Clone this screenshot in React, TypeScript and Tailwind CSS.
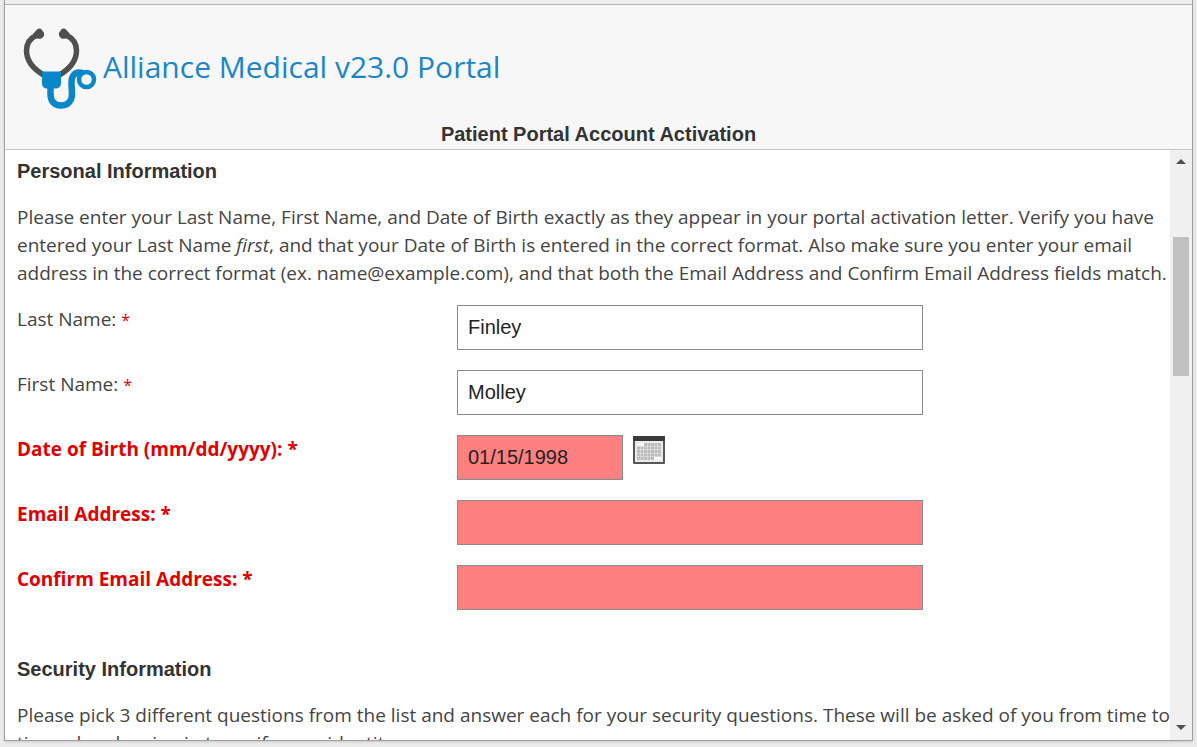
import { useState } from 'react';

// utils
import clsx from 'clsx';

interface IField {
  id: string;
  label: string;
  value: string;
  invalid?: boolean;
  isDate?: boolean;
}

const initialFields: IField[] = [
  { id: 'lastName', label: 'Last Name:', value: 'Finley' },
  { id: 'firstName', label: 'First Name:', value: 'Molley' },
  {
    id: 'birthDate',
    label: 'Date of Birth (mm/dd/yyyy):',
    value: '01/15/1998',
    invalid: true,
    isDate: true,
  },
  { id: 'email', label: 'Email Address:', value: '', invalid: true },
  { id: 'confirmEmail', label: 'Confirm Email Address:', value: '', invalid: true },
];

const Logo: React.FC = () => (
  <svg width="74" height="84" viewBox="23 27 74 84" fill="none" aria-hidden="true">
    {/* ear tubes */}
    <path
      d="M37 35C29.500 38.500 26.500 43.500 26.500 50.500c0 10.500 7.500 19 18 25"
      stroke="#4f4f4f"
      strokeWidth="5.500"
    />
    <path
      d="M66 35C73.500 38.500 76.500 43.500 76.500 50.500c0 10.500-7.500 19-18 25"
      stroke="#4f4f4f"
      strokeWidth="5.500"
    />
    <path
      d="M33 34l4-4.500c1.500-1.500 4-1.200 5 .5l1.800 2.500c1 2 0 4.500-2 5.700-2 1-4.500.8-6.500-.7z"
      fill="#4f4f4f"
    />
    <path
      d="M70 34l-4-4.500c-1.500-1.500-4-1.200-5 .5l-1.800 2.500c-1 2 0 4.500 2 5.700 2 1 4.500.8 6.500-.7z"
      fill="#4f4f4f"
    />
    {/* hose and chest piece */}
    <path d="M42 71.500h19v11c0 4-2 6-6 6h-7.500c-4 0-5.500-2-5.500-6z" fill="#0a87c9" />
    <path
      d="M50.500 86v8c0 7.500 4 11.500 10.500 11.500S72 101 72 94c0-4-.5-7-.5-11 0-7 3-10.500 7.500-10.500 2 0 3 .5 4 1"
      stroke="#0a87c9"
      strokeWidth="6.500"
    />
    <circle cx="86.500" cy="79.500" r="7.500" stroke="#0a87c9" strokeWidth="4.500" />
  </svg>
);

const CalendarIcon: React.FC = () => (
  <svg width="32" height="28" viewBox="0 0 32 28" aria-hidden="true">
    <rect width="32" height="28" rx="1" fill="#58585a" />
    <rect width="32" height="5" rx="1" fill="#3a3a3c" />
    <rect x="2" y="5" width="28" height="21" fill="#ececec" />
    {[0, 1, 2, 3, 4].map((row) =>
      [0, 1, 2, 3, 4, 5, 6].map((col) => (
        <rect
          key={`${row}-${col}`}
          x={4 + col * 3.5}
          y={7 + row * 3.5}
          width="3"
          height="3"
          fill={(row === 0 && col < 2) || (row === 4 && col > 4) ? '#ffffff' : '#bcbcbc'}
        />
      ))
    )}
  </svg>
);

const Scrollbar: React.FC = () => (
  <div className="flex w-[22px] shrink-0 flex-col items-center bg-[#f0f0f0]" aria-hidden="true">
    <svg width="10" height="21" viewBox="0 0 10 21">
      <path d="M0 14l5-5 5 5z" fill="#505050" />
    </svg>
    <div className="h-[66px]" />
    <div className="h-[139px] w-4 bg-[#c1c1c1]" />
    <div className="flex-1" />
    <svg width="10" height="21" viewBox="0 0 10 21">
      <path d="M0 6l5 5 5-5z" fill="#505050" />
    </svg>
  </div>
);

const App: React.FC = () => {
  const [fields, setFields] = useState(initialFields);

  const handleChange = (id: string, value: string) => {
    setFields(fields.map((field) => (field.id === id ? { ...field, value } : field)));
  };

  return (
    <div className="flex h-screen flex-col bg-[#ebebeb] px-1 pb-[6px] font-['Open_Sans',sans-serif] text-[19px] leading-7 text-[#444444]">
      <div className="flex min-h-0 flex-1 flex-col border-x border-b border-[#a0a0a0] bg-white shadow-sm">
        <div className="h-[5px] shrink-0 border-b border-[#b0b0b0] bg-[#efefef]" />

        <header className="shrink-0 border-b border-[#c8c8c8] bg-[#f7f7f7] px-[18px] pt-[22px]">
          <div className="flex items-start gap-[6px]">
            <Logo />
            <span className="pt-5 text-[30px] leading-10 text-[#1a86c7]">
              Alliance Medical v23.0 Portal
            </span>
          </div>
          <h1 className="mt-[9px] pb-px text-center font-['Liberation_Sans',sans-serif] text-xl leading-7 font-bold text-[#333333]">
            Patient Portal Account Activation
          </h1>
        </header>

        <div className="flex min-h-0 flex-1">
          <main className="min-w-0 flex-1 overflow-hidden pt-[7px] pl-3">
            <h2 className="font-['Liberation_Sans',sans-serif] text-xl leading-7 font-bold text-[#333333]">
              Personal Information
            </h2>
            <p className="mt-[18px]">
              Please enter your Last Name, First Name, and Date of Birth exactly as they appear in
              your portal activation letter. Verify you have entered your Last Name <em>first</em>,
              and that your Date of Birth is entered in the correct format. Also make sure you enter
              your email address in the correct format (ex. name@example.com), and that both the
              Email Address and Confirm Email Address fields match.
            </p>

            <form className="mt-[18px] flex flex-col gap-5">
              {fields.map((field) => (
                <div
                  key={field.id}
                  className="grid grid-cols-[minmax(0,440px)_minmax(0,466px)] items-start">
                  <label
                    htmlFor={field.id}
                    className={clsx(field.invalid && 'font-bold text-[#e00000]')}>
                    {field.label}{' '}
                    <span className={clsx('text-[#e00000]', !field.invalid && 'text-base')}>*</span>
                  </label>
                  <div className="flex items-start gap-[10px]">
                    <input
                      id={field.id}
                      type="text"
                      value={field.value}
                      onChange={(e) => handleChange(field.id, e.target.value)}
                      className={clsx(
                        "h-[45px] border border-[#8c8c8c] px-[10px] font-['Liberation_Sans',sans-serif] text-xl text-[#222222]",
                        field.isDate ? 'w-[166px]' : 'w-full',
                        field.invalid ? 'bg-[#ff8080]' : 'bg-white'
                      )}
                    />
                    {field.isDate && (
                      <button type="button" aria-label="Open calendar" className="mt-px">
                        <CalendarIcon />
                      </button>
                    )}
                  </div>
                </div>
              ))}
            </form>

            <h2 className="mt-[45px] font-['Liberation_Sans',sans-serif] text-xl leading-7 font-bold text-[#333333]">
              Security Information
            </h2>
            <p className="mt-[18px]">
              Please pick 3 different questions from the list and answer each for your security
              questions. These will be asked of you from time to time when logging in to verify your
              identity.
            </p>
          </main>
          <Scrollbar />
        </div>
      </div>
    </div>
  );
};

export default App;
